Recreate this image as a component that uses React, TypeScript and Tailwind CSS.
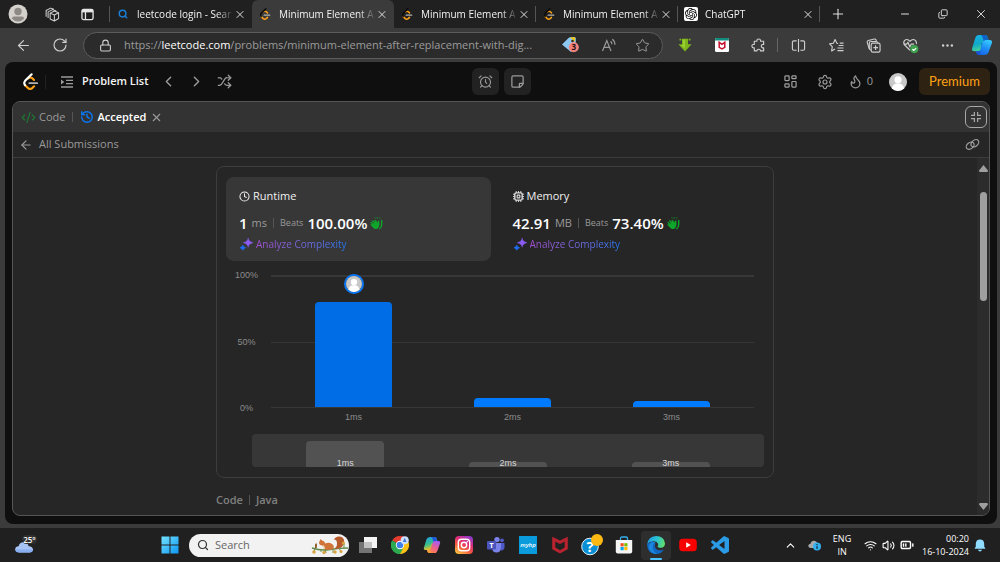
import { useState } from "react";
import type { ReactNode } from "react";
import {
  AlarmClock,
  ArrowLeft,
  BatteryMedium,
  ChevronLeft,
  ChevronRight,
  ChevronUp,
  Clock,
  CodeXml,
  Copy,
  Ellipsis,
  Flame,
  History,
  Lock,
  Minus,
  Plus,
  RotateCw,
  Search,
  Settings,
  Shuffle,
  Star,
  StickyNote,
  Volume2,
  Wifi,
  X,
} from "lucide-react";
import { SiOpenai } from "react-icons/si";

const tabs = [
  { id: 1, title: "leetcode login - Sear", icon: "search" },
  { id: 2, title: "Minimum Element A", icon: "leetcode" },
  { id: 3, title: "Minimum Element A", icon: "leetcode" },
  { id: 4, title: "Minimum Element A", icon: "leetcode" },
  { id: 5, title: "ChatGPT", icon: "openai" },
];

const buckets = [
  { label: "1ms", bar: 105, brush: 26 },
  { label: "2ms", bar: 9, brush: 5 },
  { label: "3ms", bar: 6, brush: 5 },
];

const LeetCodeLogo = ({ size, stem }: { size: number; stem: string }) => (
  <svg width={size} height={size} viewBox="0 0 24 24" fill="none" strokeWidth="3" strokeLinecap="round">
    <path d="M4.3 17.2 8.6 21.3Q11.4 23.7 14.4 21.3L17 18.8" stroke="#ffa116" />
    <path d="M8.8 7.6Q12 5.2 14.6 7.5L17 9.8" stroke="#ffa116" />
    <path d="M13.6 1.8 4.4 11Q2 14 4.3 17.2" stroke={stem} />
    <path d="M10.4 14.3H21.4" stroke="#b3b3b3" strokeWidth="2.7" />
  </svg>
);

const Avatar = ({ size }: { size: number }) => (
  <svg width={size} height={size} viewBox="0 0 20 20">
    <circle cx="10" cy="10" r="10" fill="#c8c8c8" />
    <circle cx="10" cy="7.6" r="4" fill="#fff" />
    <path d="M3.2 17.2C3.6 13.6 6 12 8 11.6h4c2 .4 4.4 2 4.8 5.6A10 10 0 0 1 3.2 17.2Z" fill="#fff" />
  </svg>
);

const ProfileIcon = () => (
  <svg width="20" height="20" viewBox="0 0 20 20">
    <circle cx="10" cy="10" r="9.5" fill="#d4d0cb" />
    <circle cx="10" cy="7.5" r="3.7" fill="#8d8985" />
    <path d="M3.8 14.5Q4.2 12.600 6 12.600h8q1.8 0 2.2 1.9A8 8 0 0 1 3.8 14.5Z" fill="#8d8985" />
  </svg>
);

const WorkspacesIcon = () => (
  <svg width="15" height="15" viewBox="0 0 16 16" fill="none" stroke="#d0d0d0" strokeWidth="1.1" strokeLinejoin="round">
    <path d="m5.5 6.5 4.5-2.2 4.5 1.8v6.2L10 15l-4.5-2.2zM5.5 6.5 10 8.6l4.5-2.5M10 8.6V15" />
    <path d="M3.3 11.8V5.2L8 2.8l4 1.4M1.2 10.4V3.8L6 1.2l3.5 1.3" />
  </svg>
);

const TabActionsIcon = () => (
  <svg width="13" height="13" viewBox="0 0 14 14" fill="none" stroke="#e6e6e6" strokeWidth="1.4">
    <rect x="1" y="1.5" width="12" height="11" rx="1.8" />
    <path d="M1 3.2h12" strokeWidth="3" />
    <path d="M4.8 4v8.5" />
  </svg>
);

const TagIcon = () => (
  <svg width="18" height="18" viewBox="0 0 18 18">
    <path d="M1 8.5 7.5 2q.7-.8 1.8-.8h4.5q1 0 1 1v9L10 16Z" fill="#8cc8f2" />
    <path d="M9 1.200h5v4.500Z" fill="#f2c811" />
    <circle cx="11.5" cy="5" r="1.3" fill="#403010" />
    <circle cx="12.8" cy="11.3" r="5" fill="#f5837c" />
    <text x="12.8" y="14.4" textAnchor="middle" fontSize="8" fontWeight="700" fill="#201010">
      3
    </text>
  </svg>
);

const ReadAloudIcon = () => (
  <svg width="16" height="16" viewBox="0 0 16 16" fill="none" stroke="#9a9a9a" strokeWidth="1.2">
    <path d="m1.500 14 4.300-10.500L10 14M3 10.300h5.600" />
    <path d="M9.6 4.2q1.300 1.200 1.300 3M11.3 2.300q2.600 1.800 2.600 5.400" />
  </svg>
);

const DownloadIcon = () => (
  <svg width="14" height="14" viewBox="0 0 14 14">
    <path d="M1.5.8h1.8v1.8H1.5zM10.7.8h1.8v1.8h-1.8zM4 .8h6v5.4h3.6L7 13.400.4 6.2H4Z" fill="#7fb51c" />
    <path d="M5 1.5h2v9L2.600 7H5Z" fill="#9bd030" />
  </svg>
);

const WebAdvisorIcon = () => (
  <svg width="14" height="14" viewBox="0 0 14 14">
    <rect width="14" height="14" rx="1.5" fill="#fff" />
    <path d="M0 1.5Q0 0 1.5 0h11Q14 0 14 1.5v1H0Z" fill="#128c7e" />
    <path d="M4.200 4.300v5L7 10.800l2.800-1.500v-5L7 6.300Z" fill="none" stroke="#c8102e" strokeWidth="1.5" />
  </svg>
);

const PuzzleIcon = () => (
  <svg width="15" height="15" viewBox="0 0 16 16" fill="none" stroke="#d0d0d0" strokeWidth="1.2" strokeLinejoin="round">
    <path d="M3.500 3.500h2.800Q6 1 8.200 1t1.900 2.500h3.400v3.400Q11 6.600 11 8.600t2.500 1.900v3.200h-3.300Q10 11.900 8.200 12t-1.900 1.700H3.500v-3.200Q1 10.700 1 8.600t2.500-1.800Z" />
  </svg>
);

const SplitIcon = () => (
  <svg width="15" height="15" viewBox="0 0 16 16" fill="none" stroke="#d0d0d0" strokeWidth="1.2">
    <path d="M6 3H3Q1.500 3 1.500 4.500v7Q1.500 13 3 13h3M10 3h3q1.500 0 1.500 1.500v7Q14.500 13 13 13h-3M8 1v14" />
  </svg>
);

const FavoritesIcon = () => (
  <svg width="15" height="15" viewBox="0 0 16 16" fill="none" stroke="#d0d0d0" strokeWidth="1.2" strokeLinejoin="round">
    <path d="M9.800 5.800 8.400 5.600 6.500 1.600 4.600 5.600l-4 .7 2.900 3-.7 4.500 3.700-2M10.300 8H15.500M9 10.700h6.500M9 13.400h6.500M11.500 5.500h4" />
  </svg>
);

const CollectionsIcon = () => (
  <svg width="15" height="15" viewBox="0 0 16 16" fill="none" stroke="#d0d0d0" strokeWidth="1.2">
    <rect x="5.500" y="5.500" width="9.500" height="9.500" rx="1.800" />
    <path d="M10.250 7.800v5M7.800 10.300h5M3.500 11.500 1.300 4.600Q1 3 2.400 2.600L9 1.100q1.300-.2 1.700 1l.3 1.100" />
    <path d="M5.500 13Q3.500 12.500 3.500 11V5.500q0-1.800 1.800-1.800h5.500q1.500 0 2 1.800" />
  </svg>
);

const HealthIcon = () => (
  <svg width="17" height="17" viewBox="0 0 18 18" fill="none" stroke="#d0d0d0" strokeWidth="1.2" strokeLinejoin="round">
    <path d="M8.500 14 2.800 8.500Q1 6 2.600 3.800 5.500 1.200 8.500 4.500q3-3.300 5.900-.7 1.300 1.600.8 3.700M1.500 7.500H5l1.300-2 2 5 1.500-3h3" />
    <circle cx="13" cy="12.800" r="4.300" fill="#3fa34d" stroke="none" />
    <path d="m11 12.900 1.400 1.400 2.600-2.600" stroke="#fff" />
  </svg>
);

const CopilotIcon = ({ size, warm }: { size: number; warm?: boolean }) => (
  <svg width={size} height={size} viewBox="0 0 20 20">
    <defs>
      <linearGradient id={warm ? "cpWarmA" : "cpA"} x1="0" y1="0" x2=".3" y2="1">
        <stop offset="0" stopColor={warm ? "#1e9bf0" : "#18b4f0"} />
        <stop offset=".6" stopColor={warm ? "#37c08a" : "#12a8c8"} />
        <stop offset="1" stopColor={warm ? "#f5c02a" : "#43d29a"} />
      </linearGradient>
      <linearGradient id={warm ? "cpWarmB" : "cpB"} x1=".7" y1="0" x2=".2" y2="1">
        <stop offset="0" stopColor={warm ? "#a45cf0" : "#35c8ff"} />
        <stop offset=".5" stopColor={warm ? "#ee5f90" : "#1e8cf5"} />
        <stop offset="1" stopColor={warm ? "#fb8a3c" : "#1760e0"} />
      </linearGradient>
    </defs>
    <path
      d="M9.500 1h3.400q1.600 0 2.100 1.600L16 5.500h-2.600q-1.600 0-2.100 1.600L9.200 14q-.6 1.600-2.200 1.600H3q-2.600 0-2-2.600L3.800 4Q4.700 1 7.500 1Z"
      fill={warm ? "url(#cpWarmA)" : "url(#cpA)"}
    />
    <path
      d="M10.500 19H7.100q-1.600 0-2.100-1.600L4.400 15.600h2.200q1.600 0 2.100-1.600l2.100-6.900q.6-1.600 2.200-1.600h4q2.600 0 2 2.600L16.200 16q-.9 3-3.700 3Z"
      fill={warm ? "url(#cpWarmB)" : "url(#cpB)"}
    />
    <path d="M12.900 1q1.600 0 2.100 1.600L16 5.500h-2.600q-1.200 0-1.800 1L10.500 3Q9.900 1 8.500 1Z" fill={warm ? "#2358d8" : "#0f62c8"} />
    <path d="m9.600 8.200.8 0-2.200 7.500q-.4 1.500.4 3.300H7.100q-1.600 0-2.100-1.600l-.6-1.800h2.200q1.600 0 2.100-1.600Z" fill={warm ? "#f7a83a" : "#1a50d0"} fillOpacity=".8" />
  </svg>
);

const ListIcon = () => (
  <svg width="14" height="14" viewBox="0 0 14 14" fill="none" stroke="#9a9a9a" strokeWidth="1.3">
    <path d="M1 2h12M6 5.300h7M6 8.700h7M1 12h12" />
    <path d="m1 4.500 3.300 2.500L1 9.500Z" fill="#9a9a9a" stroke="none" />
  </svg>
);

const LayoutIcon = () => (
  <svg width="13" height="13" viewBox="0 0 14 14" fill="none" stroke="#a0a0a0" strokeWidth="1.3">
    <rect x="1" y="1" width="4.500" height="5" rx=".6" />
    <rect x="8.500" y="1" width="4.500" height="3" rx=".6" />
    <rect x="1" y="9.500" width="4.500" height="3.500" rx=".6" />
    <rect x="8.500" y="7" width="4.500" height="6" rx=".6" />
  </svg>
);

const CollapseIcon = () => (
  <svg width="12" height="12" viewBox="0 0 12 12" fill="none" stroke="#a8a8a8" strokeWidth="1.2">
    <path d="M4.400 1v3.400H1M7.600 1v3.400H11M4.400 11V7.600H1M7.600 11V7.600H11" />
  </svg>
);

const ChainIcon = () => (
  <svg width="15" height="13" viewBox="0 0 16 14" fill="none" stroke="#a0a0a0" strokeWidth="1.3">
    <ellipse cx="5.500" cy="8.300" rx="4.700" ry="3.300" transform="rotate(-38 5.500 8.300)" />
    <ellipse cx="10.500" cy="5.700" rx="4.700" ry="3.300" transform="rotate(-38 10.500 5.700)" />
  </svg>
);

const ChipIcon = () => (
  <svg width="11" height="11" viewBox="0 0 12 12" fill="none" stroke="#e0e0e0">
    <rect x="2" y="2" width="8" height="8" rx="1.500" strokeWidth="1.500" />
    <rect x="4.500" y="4.500" width="3" height="3" rx=".5" strokeWidth="1.200" />
    <path d="M3.500 0v2M6 0v2M8.500 0v2M3.500 10v2M6 10v2M8.500 10v2M0 3.500h2M0 6h2M0 8.500h2M10 3.500h2M10 6h2M10 8.500h2" />
  </svg>
);

const ClapIcon = () => (
  <svg width="13" height="13" viewBox="0 0 14 14">
    <g stroke="#0fa52b" strokeLinecap="round" fill="none">
      <path d="M1.200 8.300 3 10M1.300 5.800 4 8.500M3 4.200l3 3.100M5.500 3.800 8 6.500" strokeWidth="1.500" />
      <path d="M9.300 8V4.600" strokeWidth="1.500" />
      <path d="M12.600 3.800V8q0 3-2.300 4.600" strokeWidth="1.500" />
      <path d="M5.600 1.400 5.300.7M8 1.400V.6M10.400 1.400l.3-.7" strokeWidth=".8" />
    </g>
    <path d="M1.800 9 5.800 4.800 8.600 7l1.400-.5V8.500q0 2.500-1.800 3.800-2.600 1.500-4.700-.5Z" fill="#0fa52b" />
  </svg>
);

const SparkleIcon = () => (
  <svg width="13" height="13" viewBox="0 0 14 14">
    <path d="M8.800 0q.4 4 5.200 5-4.800 1-5.200 5-.4-4-5.200-5 4.800-1 5.200-5Z" fill="#8a5cf0" stroke="#8a5cf0" strokeWidth=".5" />
    <path d="M3 7.800q.5 2 3 2.700-2.500.7-3 2.700-.5-2-3-2.700 2.500-.7 3-2.700Z" fill="#1e6ff5" stroke="#1e6ff5" strokeWidth=".7" />
  </svg>
);

const WeatherIcon = () => (
  <svg width="24" height="20" viewBox="0 0 24 20">
    <path d="M5 17.500Q1 17 1.200 14 1.500 11.300 4.600 11.200 5.600 7 10 7.300q3.600.2 4.700 3.900 4.100.2 4.300 3.300-.2 3-3.500 3Z" fill="#a8c4f5" />
    <path d="M5 17.500Q1.500 17 1.200 14.500H19q-.4 3-3.500 3Z" fill="#86aef0" />
    <rect x="8" y="0" width="15" height="9" rx="4.500" fill="#303030" />
    <text x="15.500" y="7.500" textAnchor="middle" fontSize="8" fontWeight="600" fill="#fff">
      25°
    </text>
  </svg>
);

const WindowsIcon = () => (
  <svg width="18" height="18" viewBox="0 0 18 18">
    <defs>
      <linearGradient id="win" x1="0" y1="0" x2="1" y2="1">
        <stop offset="0" stopColor="#74e3ff" />
        <stop offset="1" stopColor="#0c96f2" />
      </linearGradient>
    </defs>
    <path d="M.5.500h8v8h-8zM9.500.500h8v8h-8zM.5 9.500h8v8h-8zM9.500 9.500h8v8h-8z" fill="url(#win)" />
  </svg>
);

const SquirrelIcon = () => (
  <svg width="38" height="20" viewBox="0 0 38 20">
    <path d="M1 13q9 3 18 1.500T37 13" fill="none" stroke="#5d8a4a" strokeWidth="1.600" />
    <path d="M21 13q5 1 5-4t-3-4q1-4 6-3.500 5 1 4 6.500-1 5-7 6Z" fill="#b65a2c" />
    <path d="M8 7.500 9.500 4l1.500 1.500q3 .5 3 3 4-1.500 7 .5 3 2 1 5.500l-8 .5q-2-2-2.500-4.500-3 0-3.500-2.500Z" fill="#d0743a" />
    <path d="M12 10q2 1 2 4h-2Z" fill="#f3d9b8" />
    <path d="M10 14v3M14 14l1 4M22 14v4M28 13l2 4M4 13l-1 4M33 13V9" stroke="#6f8f45" />
    <g fill="#d9a441">
      <circle cx="3" cy="17" r="1.800" />
      <circle cx="13" cy="17.500" r="1.700" />
      <circle cx="24" cy="17" r="1.700" />
      <circle cx="32.500" cy="8" r="1.600" />
      <circle cx="30" cy="16.500" r="1.500" />
    </g>
    <path d="M4 9.500q2-3 2 1T4 13Z" fill="#8a5a2a" />
  </svg>
);

const TaskViewIcon = () => (
  <svg width="18" height="18" viewBox="0 0 18 18">
    <rect x="5" y="1" width="13" height="11" fill="#f3f3f3" />
    <rect x="0" y="6" width="13" height="11" fill="#7d7d7d" fillOpacity=".9" />
    <rect x="5" y="6" width="8" height="6" fill="#c2c2c2" />
  </svg>
);

const ChromeIcon = () => (
  <svg width="18" height="18" viewBox="0 0 18 18">
    <path d="M9 9 1.200 4.500A9 9 0 0 1 16.800 4.500Z" fill="#e33b2e" />
    <path d="M9 9 16.800 4.500A9 9 0 0 1 9 18Z" fill="#fbc116" />
    <path d="M9 9V18A9 9 0 0 1 1.200 4.500Z" fill="#2da94f" />
    <path d="M9 5h7.900L13 11.200 9 18l-.3-5Z" fill="#fbc116" />
    <path d="M1.200 4.500 5.500 11.200 9 13l3-.5L9 18A9 9 0 0 1 1.200 4.500Z" fill="#2da94f" />
    <circle cx="9" cy="9" r="4.200" fill="#fff" />
    <circle cx="9" cy="9" r="3.300" fill="#3f7fe8" />
    <circle cx="13.700" cy="4.300" r="4" fill="#cfe0fb" />
    <path d="M13.700 1.800 15.500 6h-3.600Z" fill="#3a72d8" />
  </svg>
);

const InstagramIcon = () => (
  <svg width="18" height="18" viewBox="0 0 18 18" fill="none">
    <defs>
      <linearGradient id="insta" x1=".2" y1="1" x2=".8" y2="0">
        <stop offset="0" stopColor="#fdc33e" />
        <stop offset=".35" stopColor="#f4583f" />
        <stop offset=".65" stopColor="#dc2c7c" />
        <stop offset="1" stopColor="#8c3bd0" />
      </linearGradient>
    </defs>
    <rect width="18" height="18" rx="4" fill="url(#insta)" />
    <rect x="3.300" y="3.300" width="11.400" height="11.400" rx="3.200" stroke="#fff" strokeWidth="1.400" />
    <circle cx="9" cy="9" r="2.700" stroke="#fff" strokeWidth="1.400" />
    <circle cx="12.300" cy="5.700" r=".8" fill="#fff" />
  </svg>
);

const TeamsIcon = () => (
  <svg width="18" height="18" viewBox="0 0 18 18">
    <circle cx="10" cy="3.600" r="2.700" fill="#7b83eb" />
    <circle cx="15" cy="4.300" r="1.900" fill="#5059c9" />
    <path d="M12 7h5.500v4.600q-.4 3-3.500 2.800Z" fill="#5059c9" />
    <path d="M5.500 7H14v5q-.4 4.500-4.500 4.500T5.200 12.500Z" fill="#7b83eb" />
    <rect x="0" y="5" width="9" height="8.500" rx="1" fill="#4b53bc" />
    <text x="4.500" y="12" textAnchor="middle" fontSize="7" fontWeight="700" fill="#fff">
      T
    </text>
  </svg>
);

const MyHpIcon = () => (
  <svg width="18" height="18" viewBox="0 0 18 18">
    <rect width="18" height="18" fill="#0a9bdc" />
    <text x="9" y="11" textAnchor="middle" fontSize="6" fontStyle="italic" fontWeight="600" fill="#fff">
      myhp
    </text>
  </svg>
);

const McAfeeIcon = () => (
  <svg width="18" height="18" viewBox="0 0 18 18">
    <path d="M1.200.8 9 4.500 16.800.8v12.500L9 17.500 1.200 13.300Z" fill="#b8232f" />
    <path d="M4.300 5.500 9 8l4.700-2.500v6L9 14.200l-4.700-2.700Z" fill="#202020" />
  </svg>
);

const HelpIcon = () => (
  <svg width="22" height="22" viewBox="0 0 22 22">
    <circle cx="9" cy="12.500" r="8.300" fill="#0a8fd4" stroke="#e8f4fb" />
    <text x="9" y="18" textAnchor="middle" fontSize="15" fontWeight="700" fill="#fff">
      ?
    </text>
    <circle cx="16" cy="6" r="6" fill="#fdb913" />
  </svg>
);

const StoreIcon = () => (
  <svg width="18" height="18" viewBox="0 0 18 18">
    <path d="M5.500 5V2.500Q5.500 1 7 1h4q1.500 0 1.500 1.500V5" fill="none" stroke="#35b0ee" strokeWidth="1.300" />
    <path d="M.8 4h16.400v11.500q0 2-2 2H2.800q-2 0-2-2Z" fill="#f5f5f5" />
    <path d="M5.500 7.200h3.200v3.200H5.500z" fill="#f25022" />
    <path d="M9.300 7.200h3.200v3.200H9.300z" fill="#7fba00" />
    <path d="M5.500 11h3.200v3.200H5.500z" fill="#00a4ef" />
    <path d="M9.300 11h3.200v3.200H9.300z" fill="#ffb900" />
  </svg>
);

const EdgeIcon = () => (
  <svg width="18" height="18" viewBox="0 0 18 18">
    <defs>
      <linearGradient id="edgeTop" x1="0" y1=".4" x2="1" y2=".6">
        <stop offset="0" stopColor="#1f9fe8" />
        <stop offset=".5" stopColor="#2bc3d2" />
        <stop offset="1" stopColor="#62e066" />
      </linearGradient>
    </defs>
    <path d="M.1 8Q0 16.500 7.500 18q5.500 1 9-3.800.2-.6-.4-.4-4.600 1.600-7.300-1.400Q7 10 8.600 7.300L5 5Z" fill="#1166c0" />
    <path d="M.2 8.500Q1.200.300 9 0q8.400.300 9 7.400 0 4-4.300 4.400-2.900 0-3.200-1.300 1.100-1 .6-2.800Q10 5.300 6.500 5.300 2 5.300.2 8.500Z" fill="url(#edgeTop)" />
    <path d="M5.800 10q0-2.500 2.600-3.700Q5 5.500 2.800 8T2.600 14q2.600 4 7.400 4-4.200-2.500-4.200-8Z" fill="#1a86dc" />
  </svg>
);

const YouTubeIcon = () => (
  <svg width="18" height="18" viewBox="0 0 18 18">
    <rect x=".2" y="2.800" width="17.600" height="12.400" rx="3.500" fill="#f60000" />
    <path d="m7.200 6.300 4.600 2.700-4.600 2.700Z" fill="#fff" />
  </svg>
);

const VsCodeIcon = () => (
  <svg width="18" height="18" viewBox="0 0 24 24" fill="#2a9be4">
    <path d="M23.150 2.587L18.210.21a1.494 1.494 0 0 0-1.705.29l-9.460 8.630-4.120-3.128a.999.999 0 0 0-1.276.057L.327 7.261A1 1 0 0 0 .326 8.740L3.899 12 .326 15.260a1 1 0 0 0 .001 1.479L1.650 17.940a.999.999 0 0 0 1.276.057l4.120-3.128 9.460 8.630a1.492 1.492 0 0 0 1.704.290l4.942-2.377A1.500 1.500 0 0 0 24 20.060V3.939a1.500 1.500 0 0 0-.850-1.352zm-5.146 14.861L10.826 12l7.178-5.448v10.896z" />
  </svg>
);

const OneDriveIcon = () => (
  <svg width="13" height="12" viewBox="0 0 13 12">
    <path d="M2.500 9Q0 8.600.3 6.500.7 4.800 2.500 4.700 3.300 1.500 6.300 1.800q2.300.2 3 2.600 2.200.3 2.200 2.300T9.300 9Z" fill="#a8a8a8" />
    <circle cx="9" cy="7.500" r="4" fill="#35b0ee" />
    <path d="M9 5v1.200M9 7v3" stroke="#103040" strokeWidth="1.200" />
  </svg>
);

const BellIcon = () => (
  <svg width="12" height="13" viewBox="0 0 12 13" fill="#8fdcff">
    <path d="M6 .5q4 0 4.200 4.300v2.700l1.300 2.300H.5l1.300-2.300V4.800Q2 .5 6 .5ZM4 10.800h4Q7.500 12.500 6 12.500T4 10.800Z" />
  </svg>
);

const IconButton = ({ label, className, children }: { label: string; className?: string; children: ReactNode }) => (
  <button aria-label={label} className={`flex shrink-0 items-center justify-center ${className ?? ""}`}>
    {children}
  </button>
);

const TabIcon = ({ icon }: { icon: string }) => {
  if (icon === "search") return <Search size={10} strokeWidth={3.5} className="text-[#1a7fd8]" />;
  if (icon === "leetcode") return <LeetCodeLogo size={14} stem="#0c0c0c" />;
  return (
    <span className="flex size-[14px] shrink-0 items-center justify-center rounded-xs bg-white">
      <SiOpenai size={12} className="text-black" />
    </span>
  );
};

const TabStrip = () => {
  const [active, setActive] = useState(2);

  return (
    <div className="flex h-7 items-stretch pl-2">
      <IconButton label="Profile" className="w-5">
        <ProfileIcon />
      </IconButton>
      <IconButton label="Workspaces" className="ml-3 w-6">
        <WorkspacesIcon />
      </IconButton>
      <IconButton label="Tab actions" className="ml-[11px] w-6">
        <TabActionsIcon />
      </IconButton>
      <div className="my-auto ml-2.5 h-4 w-px bg-[#555]" />
      {tabs.map((tab) => (
        <div
          key={tab.id}
          className={`relative flex w-[142px] items-center pr-1.5 pl-[7px] ${tab.id === active ? "rounded-t-md bg-[#3b3b3b]" : ""}`}
        >
          <button onClick={() => setActive(tab.id)} className="flex flex-1 items-center gap-2">
            <span className="flex w-3 shrink-0 justify-center">
              <TabIcon icon={tab.icon} />
            </span>
            <span className="flex-1 text-left text-[10px] whitespace-nowrap text-[#f2f2f2] [mask-image:linear-gradient(to_right,#000_82%,transparent)]">
              {tab.title}
            </span>
          </button>
          <IconButton label="Close tab" className="w-3">
            <X size={13} strokeWidth={1.8} className="text-[#f0f0f0]" />
          </IconButton>
          {tab.id > 2 && <span className="absolute top-1.5 right-0 h-4 w-px bg-[#555]" />}
        </div>
      ))}
      <IconButton label="New tab" className="ml-1.5 w-6">
        <Plus size={16} strokeWidth={1.6} className="text-[#e0e0e0]" />
      </IconButton>
      <div className="ml-auto flex">
        <IconButton label="Minimize" className="w-[38px]">
          <Minus size={12} strokeWidth={2} />
        </IconButton>
        <IconButton label="Restore" className="w-[38px]">
          <Copy size={10} strokeWidth={2.2} className="-scale-x-100 rotate-180" />
        </IconButton>
        <IconButton label="Close" className="w-[38px]">
          <X size={14} strokeWidth={1.6} />
        </IconButton>
      </div>
    </div>
  );
};

const Toolbar = () => (
  <div className="flex h-[34px] items-center bg-[#3b3b3b] pr-0.5 text-[#d0d0d0]">
    <IconButton label="Back" className="ml-1 w-[38px]">
      <ArrowLeft size={17} strokeWidth={1.6} />
    </IconButton>
    <IconButton label="Refresh" className="w-9">
      <RotateCw size={16} strokeWidth={1.7} />
    </IconButton>
    <label className="ml-[5px] flex h-[27px] min-w-0 flex-1 items-center rounded-full border border-[#5c5c5c] bg-[#2b2b2b] pr-3 pl-[15px]">
      <Lock size={13} strokeWidth={2} />
      <span className="ml-3 text-[11px] whitespace-nowrap text-[#9b9b9b]">
        https://<span className="text-white">leetcode.com</span>/problems/minimum-element-after-replacement-with-dig...
      </span>
      <input type="text" aria-label="Address" className="min-w-0 flex-1 outline-none" />
      <TagIcon />
      <span className="ml-[22px]">
        <ReadAloudIcon />
      </span>
      <Star size={15} strokeWidth={1.6} className="ml-[18px] text-[#9a9a9a]" />
    </label>
    <div className="ml-[3px] flex items-center">
      <IconButton label="Downloader" className="w-[37px]">
        <DownloadIcon />
      </IconButton>
      <IconButton label="WebAdvisor" className="w-[37px]">
        <WebAdvisorIcon />
      </IconButton>
      <IconButton label="Extensions" className="w-[37px]">
        <PuzzleIcon />
      </IconButton>
      <div className="h-3.5 w-px bg-[#666]" />
      <IconButton label="Split screen" className="w-10">
        <SplitIcon />
      </IconButton>
      <IconButton label="Favorites" className="w-[37px]">
        <FavoritesIcon />
      </IconButton>
      <IconButton label="Collections" className="w-[37px]">
        <CollectionsIcon />
      </IconButton>
      <IconButton label="Browser essentials" className="w-[37px]">
        <HealthIcon />
      </IconButton>
      <IconButton label="More" className="w-[37px]">
        <Ellipsis size={15} />
      </IconButton>
      <IconButton label="Copilot" className="w-8">
        <CopilotIcon size={22} />
      </IconButton>
    </div>
  </div>
);

const SiteNav = () => (
  <nav className="grid h-[39px] grid-cols-[1fr_auto_1fr] items-center px-[7px] text-[#9a9a9a]">
    <div className="flex items-center">
      <a href="#home" aria-label="LeetCode" className="ml-2.5">
        <LeetCodeLogo size={17} stem="#fff" />
      </a>
      <div className="ml-1.5 h-3.5 w-px bg-[#222]" />
      <a href="#problems" className="ml-3.5 flex items-center gap-2 text-[11px] font-semibold text-[#f5f5f5]">
        <ListIcon />
        Problem List
      </a>
      <IconButton label="Previous problem" className="ml-1.5 w-7">
        <ChevronLeft size={17} strokeWidth={2} />
      </IconButton>
      <IconButton label="Next problem" className="w-7">
        <ChevronRight size={17} strokeWidth={2} />
      </IconButton>
      <IconButton label="Random problem" className="w-7">
        <Shuffle size={15} />
      </IconButton>
    </div>
    <div className="flex gap-[5px]">
      <IconButton label="Timer" className="size-[27px] rounded-md bg-[#222]">
        <AlarmClock size={15} strokeWidth={1.8} />
      </IconButton>
      <IconButton label="Notes" className="size-[27px] rounded-md bg-[#222]">
        <StickyNote size={15} strokeWidth={2} className="-scale-y-100" />
      </IconButton>
    </div>
    <div className="flex items-center justify-end">
      <IconButton label="Layout" className="w-[34px]">
        <LayoutIcon />
      </IconButton>
      <IconButton label="Settings" className="w-[34px]">
        <Settings size={16} strokeWidth={1.8} />
      </IconButton>
      <button className="ml-1.5 flex items-center gap-1 text-[11px]">
        <Flame size={15} />0
      </button>
      <IconButton label="Account" className="mr-3 ml-4">
        <Avatar size={18} />
      </IconButton>
      <button className="h-[27px] w-[71px] rounded-md bg-[#2e2213] font-['Lato',sans-serif] text-[13px] text-[#ffa116]">
        Premium
      </button>
    </div>
  </nav>
);

const Divider = ({ className }: { className: string }) => <span className={`w-px bg-[#555] ${className}`} />;

type StatCardProps = { icon: ReactNode; title: string; value: string; unit: string; beats: string; selected?: boolean };

const StatCard = ({ icon, title, value, unit, beats, selected }: StatCardProps) => (
  <div className={`rounded-lg px-[13px] pt-[11px] pb-[9px] ${selected ? "bg-[#373737]" : ""}`}>
    <div className="flex h-4 items-center gap-[3px] text-[11px] text-[#f0f0f0]">
      {icon}
      {title}
    </div>
    <div className="mt-[9px] flex h-5 items-center">
      <span className="text-[15px] font-semibold text-white">{value}</span>
      <span className="ml-1 text-[11px] text-[#9a9a9a]">{unit}</span>
      <Divider className="mx-1.5 h-2.5" />
      <span className="text-[9px] text-[#9a9a9a]">Beats</span>
      <span className="mr-[3px] ml-1 text-[15px] font-semibold text-white">{beats}</span>
      <ClapIcon />
    </div>
    <button className="mt-[3px] flex h-4 items-center gap-[3px] pl-px">
      <SparkleIcon />
      <span className="bg-linear-to-r from-[#a34fd0] to-[#1a78f0] bg-clip-text text-[10px] text-transparent">
        Analyze Complexity
      </span>
    </button>
  </div>
);

const Distribution = () => (
  <div className="mt-3.5 font-['Liberation_Sans',sans-serif] text-[9px] leading-3">
    <div className="flex pr-2.5">
      <div className="-my-1.5 flex w-[45px] flex-col items-center justify-between pr-1 text-[#8c8c8c]">
        <span>100%</span>
        <span>50%</span>
        <span>0%</span>
      </div>
      <div className="relative flex h-[133px] flex-1 items-end border-t-2 border-b border-[#373737] px-[3px]">
        <span className="absolute inset-x-0 top-[65px] h-px bg-[#373737]" />
        {buckets.map((bucket, i) => (
          <div key={bucket.label} className="relative flex flex-1 flex-col items-center gap-2">
            {i === 0 && (
              <span className="rounded-full border-2 border-[#0a78f5]">
                <Avatar size={16} />
              </span>
            )}
            <div
              className={`w-[77px] rounded-t-sm ${i === 0 ? "bg-[#006ce6]" : "bg-[#007bff]"}`}
              style={{ height: bucket.bar }}
            />
          </div>
        ))}
      </div>
    </div>
    <div className="mt-[3px] flex pr-[13px] pl-12 text-center text-[#8c8c8c]">
      {buckets.map((bucket) => (
        <span key={bucket.label} className="flex-1">
          {bucket.label}
        </span>
      ))}
    </div>
    <div className="mt-[11px] ml-[26px] flex h-[33px] items-end overflow-hidden rounded-sm bg-[#373737] px-3">
      {buckets.map((bucket) => (
        <div key={bucket.label} className="relative flex flex-1 justify-center">
          <div className="w-[78px] rounded-t-sm bg-[#525252]" style={{ height: bucket.brush }} />
          <span className="absolute -bottom-0.5 text-[#d8d8d8]">{bucket.label}</span>
        </div>
      ))}
    </div>
  </div>
);

const SubmissionPanel = () => (
  <section className="mx-[7px] flex flex-1 flex-col overflow-hidden rounded-lg border border-[#555] bg-[#262626] text-[#9a9a9a]">
    <div className="flex h-[30px] items-center bg-[#333] pr-0.5 pl-2 text-[11px]">
      <button className="flex items-center gap-[3px]">
        <CodeXml size={15} strokeWidth={1.8} className="text-[#1e7a34]" />
        Code
      </button>
      <Divider className="mx-[7px] h-2.5" />
      <button className="flex items-center gap-[3px] font-semibold text-white">
        <History size={14} strokeWidth={2.4} className="text-[#0a78f5]" />
        Accepted
      </button>
      <IconButton label="Close result" className="ml-1">
        <X size={13} />
      </IconButton>
      <IconButton label="Exit full screen" className="ml-auto size-[22px] rounded-md border border-[#a8a8a8]">
        <CollapseIcon />
      </IconButton>
    </div>
    <div className="flex h-[26px] items-center justify-between border-b border-[#3c3c3c] pr-[9px] pl-1.5 text-[11px]">
      <button className="flex items-center gap-1.5">
        <ArrowLeft size={14} />
        All Submissions
      </button>
      <IconButton label="Copy link">
        <ChainIcon />
      </IconButton>
    </div>
    <div className="flex flex-1">
      <div className="min-w-0 flex-1 px-4 pt-2">
        <div className="mx-auto max-w-[558px]">
          <div className="rounded-lg border border-[#3d3d3d] px-[9px] py-2.5">
            <div className="grid grid-cols-2 gap-[9px]">
              <StatCard
                icon={<Clock size={11} strokeWidth={2.2} />}
                title="Runtime"
                value="1"
                unit="ms"
                beats="100.00%"
                selected
              />
              <StatCard icon={<ChipIcon />} title="Memory" value="42.91" unit="MB" beats="73.40%" />
            </div>
            <Distribution />
          </div>
          <div className="mt-3.5 flex items-center text-[11px] font-semibold text-[#808080]">
            Code
            <Divider className="mx-1.5 h-2.5" />
            Java
          </div>
        </div>
      </div>
      <div className="flex w-3 flex-col items-center justify-between bg-[#2c2c2c] pt-[7px] pb-[5px]">
        <div className="flex flex-col items-center">
          <svg width="9" height="7" viewBox="0 0 9 7" fill="#9f9f9f">
            <path d="M4.500 0 9 5.500Q9 7 8 7H1Q0 7 0 5.500Z" />
          </svg>
          <div className="mt-5 h-[109px] w-[7px] rounded-full bg-[#9f9f9f]" />
        </div>
        <svg width="9" height="7" viewBox="0 0 9 7" fill="#9f9f9f">
          <path d="M4.500 7 0 1.500Q0 0 1 0h7q1 0 1 1.500Z" />
        </svg>
      </div>
    </div>
  </section>
);

const apps = [
  { name: "Task view", icon: <TaskViewIcon /> },
  { name: "Chrome", icon: <ChromeIcon /> },
  { name: "Copilot", icon: <CopilotIcon size={18} warm /> },
  { name: "Instagram", icon: <InstagramIcon /> },
  { name: "Teams", icon: <TeamsIcon /> },
  { name: "HP", icon: <MyHpIcon /> },
  { name: "McAfee", icon: <McAfeeIcon /> },
  { name: "Help", icon: <HelpIcon /> },
  { name: "Store", icon: <StoreIcon /> },
  { name: "Edge", icon: <EdgeIcon />, active: true },
  { name: "YouTube", icon: <YouTubeIcon /> },
  { name: "VS Code", icon: <VsCodeIcon /> },
];

const Taskbar = () => (
  <footer className="flex h-[34px] items-center bg-[#202020] pr-3.5">
    <IconButton label="Weather" className="ml-3.5 w-6">
      <WeatherIcon />
    </IconButton>
    <IconButton label="Start" className="ml-[123px] w-[18px]">
      <WindowsIcon />
    </IconButton>
    <label className="ml-2.5 flex h-[23px] w-40 items-center rounded-full bg-[#f2f2f2] pl-2">
      <Search size={12} strokeWidth={2.4} className="shrink-0 text-[#303030]" />
      <input
        type="text"
        aria-label="Search"
        placeholder="Search"
        className="ml-1.5 min-w-0 flex-1 text-[11px] text-black outline-none placeholder:text-[#666]"
      />
      <span className="shrink-0">
        <SquirrelIcon />
      </span>
    </label>
    <div className="ml-[3px] flex">
      {apps.map((app) => (
        <IconButton
          key={app.name}
          label={app.name}
          className={`relative mx-px h-[29px] w-[30px] rounded-sm ${app.active ? "bg-[#2e2e2e]" : ""}`}
        >
          {app.icon}
          {app.active && <span className="absolute bottom-0 h-0.5 w-3 rounded-full bg-[#4cc2ff]" />}
        </IconButton>
      ))}
    </div>
    <div className="ml-auto flex items-center text-[9px] leading-[13px] text-white">
      <IconButton label="Hidden icons" className="w-6">
        <ChevronUp size={13} />
      </IconButton>
      <IconButton label="OneDrive" className="w-6">
        <OneDriveIcon />
      </IconButton>
      <button className="w-8 text-center">
        ENG
        <br />
        IN
      </button>
      <button aria-label="Quick settings" className="ml-1.5 flex items-center gap-[5px]">
        <Wifi size={13} />
        <Volume2 size={13} />
        <BatteryMedium size={14} strokeWidth={2.4} />
      </button>
      <button className="ml-2 text-right">
        00:20
        <br />
        16-10-2024
      </button>
      <IconButton label="Notifications" className="ml-[5px]">
        <BellIcon />
      </IconButton>
    </div>
  </footer>
);

export default function App() {
  return (
    <div className="flex min-h-screen flex-col bg-[#202020] font-['Open_Sans',sans-serif] text-[#e0e0e0]">
      <TabStrip />
      <Toolbar />
      <div className="flex flex-1 flex-col bg-[#3b3b3b] pr-[3px] pb-1 pl-[5px]">
        <main className="flex flex-1 flex-col rounded-lg bg-[#0f0f0f] pb-2">
          <SiteNav />
          <SubmissionPanel />
        </main>
      </div>
      <Taskbar />
    </div>
  );
}
